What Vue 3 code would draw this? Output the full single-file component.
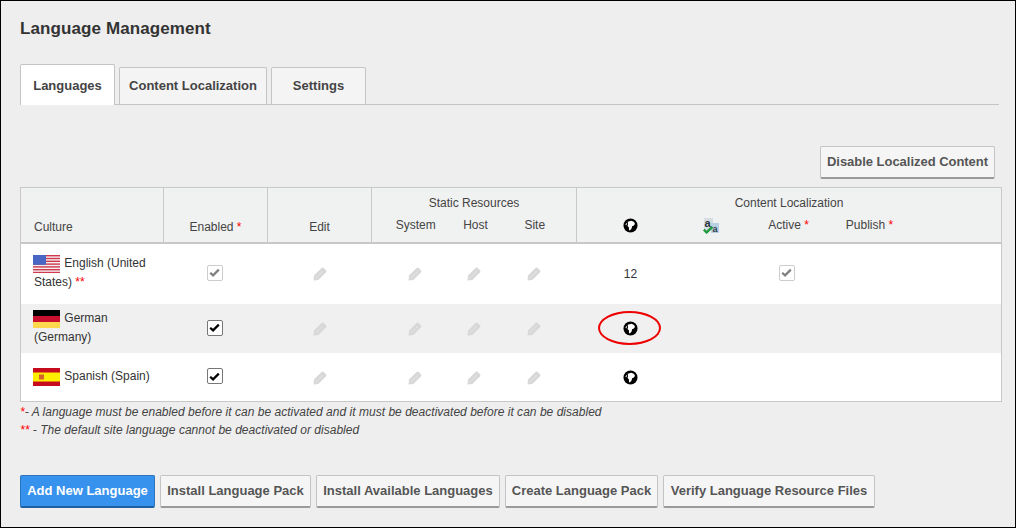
<script setup>
const tabs = [
  { name: 'Languages', cls: 'active' },
  { name: 'Content Localization', cls: 'wide' },
  { name: 'Settings', cls: '' }
]

const languages = [
  { name: 'English (United States)', flag: 'us', isDefault: true, locked: true, count: '12', active: true, rowClass: 'row-a' },
  { name: 'German (Germany)', flag: 'de', isDefault: false, locked: false, circled: true, rowClass: 'row-b' },
  { name: 'Spanish (Spain)', flag: 'es', isDefault: false, locked: false, rowClass: 'row-c' }
]

const stripes = [0, 2, 4, 6, 8, 10, 12]
const actions = ['Install Language Pack', 'Install Available Languages', 'Create Language Pack', 'Verify Language Resource Files']
const globeLand = 'M5 3.9 9 2.8l2.8 1.5 1 2.2-1.6 1.7-1.5.6-.4 2-1.9 2.4-.9-.4-.3-2.9-1.4-1.5.6-1.5zM2.6 6.8l1.2-1.8.4 1.3-.9 1.8z'
const pencilBody = 'M0.5 13.5 1 8.6 8.5 1.1a1.6 1.6 0 0 1 2.2 0l2.2 2.2a1.6 1.6 0 0 1 0 2.2L5.4 13z'
</script>

<template>
  <div class="page">
    <h1 class="title">Language Management</h1>

    <div class="tabs">
      <div v-for="tab in tabs" :key="tab.name" class="tab" :class="tab.cls">{{ tab.name }}</div>
    </div>

    <div class="top-actions">
      <button class="btn">Disable Localized Content</button>
    </div>

    <table class="grid">
      <colgroup>
        <col class="c-culture"><col class="c-enabled"><col class="c-edit">
        <col class="c-system"><col class="c-host"><col class="c-site">
        <col class="c-globe"><col class="c-tr"><col class="c-active"><col class="c-publish"><col>
      </colgroup>
      <thead>
        <tr class="head-top">
          <th rowspan="2" class="culture-head sep">Culture</th>
          <th rowspan="2" class="low sep">Enabled <span class="req">*</span></th>
          <th rowspan="2" class="low sep">Edit</th>
          <th colspan="3" class="sep">Static Resources</th>
          <th colspan="5" class="cl-head">Content Localization</th>
        </tr>
        <tr class="head-sub">
          <th class="shift-r">System</th>
          <th>Host</th>
          <th class="shift-l sep">Site</th>
          <th>
            <svg class="globe" viewBox="0 0 16 16"><circle cx="8" cy="8" r="7.5" fill="#000"/><path :d="globeLand" fill="#fff"/></svg>
          </th>
          <th>
            <svg class="tr-icon" viewBox="0 0 16 16">
              <rect x="1" y="0" width="9" height="12" fill="#d5dde3"/>
              <rect x="8" y="5" width="8" height="10" fill="#b9cfe2"/>
              <text x="1.6" y="8.5" font-size="11" font-weight="700" fill="#26333b" font-family="Liberation Sans, sans-serif">a</text>
              <text x="9.4" y="13.5" font-size="9" font-weight="700" fill="#2d3d4a" font-family="Liberation Sans, sans-serif">a</text>
              <path d="M0.8 11.6l2.8 2.8L9.4 8.8" fill="none" stroke="#1f9a3c" stroke-width="2.4"/>
            </svg>
          </th>
          <th class="active-head">Active <span class="req">*</span></th>
          <th>Publish <span class="req">*</span></th>
          <th></th>
        </tr>
      </thead>
      <tbody>
        <tr v-for="lang in languages" :key="lang.name" :class="lang.rowClass">
          <td class="culture">
            <svg class="flag" viewBox="0 0 27 18" preserveAspectRatio="none">
              <template v-if="lang.flag === 'us'">
                <rect width="27" height="18" fill="#f4f0f2"/>
                <rect v-for="y in stripes" :key="y" x="0" :y="y * 1.4" width="27" height="1.4" fill="#cf3a4c"/>
                <rect width="13" height="9.8" fill="#4a66c4"/>
              </template>
              <template v-else-if="lang.flag === 'de'">
                <rect width="27" height="6" fill="#000"/>
                <rect y="6" width="27" height="6" fill="#c8102e"/>
                <rect y="12" width="27" height="6" fill="#ffd84d"/>
              </template>
              <template v-else>
                <rect width="27" height="18" fill="#c60b1e"/>
                <rect y="4.5" width="27" height="9" fill="#ffee00"/>
                <rect x="6" y="6.5" width="5" height="5" fill="#d4622a"/>
              </template>
            </svg>
            {{ lang.name }} <span v-if="lang.isDefault" class="req">**</span>
          </td>
          <td class="mid">
            <span class="check" :class="{ locked: lang.locked }">
              <svg viewBox="0 0 12 10"><path d="M1.2 5.2 4.4 8.2 10.8 1.8" fill="none" stroke="currentColor" stroke-width="2.4"/></svg>
            </span>
          </td>
          <td class="mid">
            <svg class="pencil" viewBox="0 0 14 14"><path :d="pencilBody" fill="#d8d8d8"/><path d="M3 10.8 10 3.8" stroke="#efefef" stroke-width="0.8" stroke-dasharray="1.4 1"/></svg>
          </td>
          <td class="mid shift-r">
            <svg class="pencil nudge" viewBox="0 0 14 14"><path :d="pencilBody" fill="#d8d8d8"/><path d="M3 10.8 10 3.8" stroke="#efefef" stroke-width="0.8" stroke-dasharray="1.4 1"/></svg>
          </td>
          <td class="mid">
            <svg class="pencil nudge-2" viewBox="0 0 14 14"><path :d="pencilBody" fill="#d8d8d8"/><path d="M3 10.8 10 3.8" stroke="#efefef" stroke-width="0.8" stroke-dasharray="1.4 1"/></svg>
          </td>
          <td class="mid shift-l">
            <svg class="pencil nudge" viewBox="0 0 14 14"><path :d="pencilBody" fill="#d8d8d8"/><path d="M3 10.8 10 3.8" stroke="#efefef" stroke-width="0.8" stroke-dasharray="1.4 1"/></svg>
          </td>
          <td class="mid globe-cell">
            <span v-if="lang.count" class="count">{{ lang.count }}</span>
            <span v-else class="globe-wrap">
              <svg class="globe" viewBox="0 0 16 16"><circle cx="8" cy="8" r="7.5" fill="#000"/><path :d="globeLand" fill="#fff"/></svg>
              <span v-if="lang.circled" class="ring"></span>
            </span>
          </td>
          <td></td>
          <td class="mid">
            <span v-if="lang.active" class="check locked">
              <svg viewBox="0 0 12 10"><path d="M1.2 5.2 4.4 8.2 10.8 1.8" fill="none" stroke="currentColor" stroke-width="2.4"/></svg>
            </span>
          </td>
          <td></td>
          <td></td>
        </tr>
      </tbody>
    </table>

    <div class="notes">
      <p><span class="req">*</span>- A language must be enabled before it can be activated and it must be deactivated before it can be disabled</p>
      <p><span class="req">**</span> - The default site language cannot be deactivated or disabled</p>
    </div>

    <div class="actions">
      <button class="btn primary">Add New Language</button>
      <button v-for="label in actions" :key="label" class="btn">{{ label }}</button>
    </div>
  </div>
</template>

<style>
html, body { margin: 0; padding: 0; }
</style>

<style scoped>
.page {
  box-sizing: border-box;
  width: 1016px;
  height: 528px;
  border: 1px solid #000;
  background: #eeeeee;
  padding: 18px 0 0 19px;
  font-family: "Liberation Sans", Arial, sans-serif;
  font-size: 12px;
  color: #333;
  overflow: hidden;
}
.title {
  margin: 0;
  font-size: 17px;
  line-height: 20px;
  font-weight: 700;
  color: #333;
  letter-spacing: 0.1px;
}
.tabs {
  display: flex;
  align-items: flex-end;
  gap: 4px;
  width: 979px;
  height: 40px;
  margin-top: 25px;
  border-bottom: 1px solid #c4c4c4;
}
.tab {
  box-sizing: border-box;
  width: 95px;
  height: 37px;
  line-height: 35px;
  text-align: center;
  font-size: 13px;
  font-weight: 700;
  color: #444;
  background: #f4f4f4;
  border: 1px solid #c4c4c4;
  border-bottom: 0;
  border-radius: 2px 2px 0 0;
  white-space: nowrap;
}
.tab.wide { width: 148px; }
.tab.active {
  height: 41px;
  margin-bottom: -1px;
  background: #fff;
  line-height: 41px;
}
.top-actions {
  display: flex;
  justify-content: flex-end;
  width: 975px;
  margin-top: 41px;
}
.btn {
  box-sizing: border-box;
  height: 33px;
  padding: 0 0 2px;
  font-family: inherit;
  font-size: 13px;
  font-weight: 700;
  color: #555;
  background: #f5f5f5;
  border: 1px solid #c4c4c4;
  border-bottom: 2px solid #9a9a9a;
  border-radius: 2px;
  white-space: nowrap;
}
.top-actions .btn { width: 175px; letter-spacing: -0.03px; }
.btn.primary {
  color: #fff;
  background: #3792ed;
  border-color: #2c74bd;
  border-bottom-color: #1f5f9f;
}
.grid {
  table-layout: fixed;
  width: 982px;
  height: 215px;
  margin-top: 8px;
  border-collapse: collapse;
  border: 1px solid #c8c8c8;
}
.c-culture { width: 143px; }
.c-enabled, .c-edit { width: 104px; }
.c-system { width: 74px; }
.c-host { width: 60px; }
.c-site { width: 71px; }
.c-globe { width: 108px; }
.c-tr { width: 52px; }
.c-active { width: 102px; }
.c-publish { width: 62px; }
th {
  padding: 0;
  font-weight: 400;
  background: #f0f1f1;
  color: #444;
  text-align: center;
  vertical-align: middle;
}
.head-top { height: 29px; }
.head-sub { height: 26px; border-bottom: 2px solid #c8c8c8; }
.head-top th { vertical-align: bottom; padding-bottom: 7px; }
.head-top .low { padding-bottom: 8px; }
.head-sub th { vertical-align: top; padding-top: 1px; }
.head-top .culture-head { text-align: left; padding-left: 13px; padding-bottom: 8px; }
.head-sub .active-head { padding-left: 2px; }
.sep { border-right: 1px solid #c8c8c8; }
.head-top th[rowspan] { border-bottom: 2px solid #c8c8c8; }
.shift-r { padding-left: 14px; }
.shift-l { padding-right: 12px; }
.row-a { height: 61px; background: #fff; }
.row-b { height: 49px; background: #f0f0f0; }
.row-c { height: 48px; background: #fff; }
td { padding: 0; color: #333; }
.mid { text-align: center; vertical-align: middle; }
.culture {
  padding: 0 8px 2px 13px;
  line-height: 19px;
  vertical-align: middle;
}
.flag {
  width: 27px;
  height: 18px;
  margin: 0 1px 0 -1px;
  vertical-align: -6px;
}
.req { color: #f00; }
.check {
  box-sizing: border-box;
  display: inline-flex;
  align-items: center;
  justify-content: center;
  width: 16px;
  height: 16px;
  margin: 0 2px 2px 0;
  border: 1px solid #777;
  border-radius: 2px;
  background: #fff;
  color: #000;
  vertical-align: middle;
}
.check.locked {
  border-color: #ccc;
  color: #808080;
}
.check svg { width: 11px; height: 9px; }
.pencil { width: 14px; height: 14px; vertical-align: middle; }
.pencil.nudge { margin-right: 2px; }
.pencil.nudge-2 { margin-right: 4px; }
.globe { width: 15px; height: 15px; vertical-align: middle; }
.tr-icon { width: 16px; height: 16px; vertical-align: middle; }
.globe-wrap { position: relative; display: inline-block; line-height: 0; }
.ring {
  position: absolute;
  left: -25px;
  top: -10px;
  width: 59px;
  height: 30px;
  border: 2px solid #ee0000;
  border-radius: 50%;
}
.notes {
  margin-top: 1px;
  font-style: italic;
  color: #444;
  letter-spacing: 0.025px;
}
.notes p { margin: 0; line-height: 18px; height: 18px; }
.actions {
  display: flex;
  gap: 5px;
  margin-top: 36px;
}
.actions .btn:nth-child(1) { width: 135px; }
.actions .btn:nth-child(2) { width: 151px; }
.actions .btn:nth-child(3) { width: 184px; }
.actions .btn:nth-child(4) { width: 153px; }
.actions .btn:nth-child(5) { width: 212px; }
</style>
